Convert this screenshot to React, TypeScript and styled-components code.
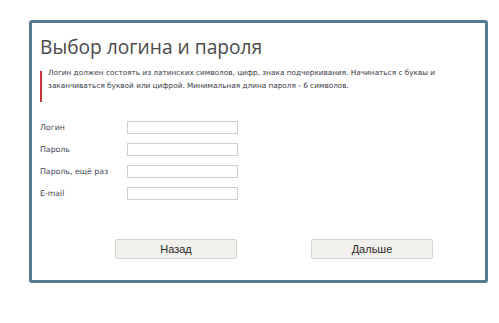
import React from "react";
import styled, { createGlobalStyle } from "styled-components";

const Global = createGlobalStyle`
  html, body { margin: 0; padding: 0; background: #fff; }
  body { font-family: "DejaVu Sans", Verdana, sans-serif; }
`;

const Page = styled.div`
  padding: 20px 0 0 29px;
`;

const Panel = styled.div`
  box-sizing: border-box;
  width: 459px;
  height: 263px;
  border: 3px solid #547b8f;
  border-radius: 3px;
  background: #fff;
  padding: 11px 8px 0 8px;
  display: flex;
  flex-direction: column;
`;

const Title = styled.h1`
  margin: 0;
  font-family: "Open Sans", sans-serif;
  font-weight: 400;
  font-size: 19.2px;
  line-height: 26px;
  color: #4a4a4a;
`;

const Note = styled.div`
  position: relative;
  margin-top: 6px;
  padding: 0 0 10px 8px;
  font-size: 7.3px;
  line-height: 13px;
  color: #3a3a44;
  &::before {
    content: "";
    position: absolute;
    left: 0;
    top: 5px;
    bottom: 0;
    width: 2px;
    background: #c9343a;
  }
`;

const Form = styled.div`
  margin-top: 19px;
  display: flex;
  flex-direction: column;
  gap: 9px;
`;

const Row = styled.div`
  display: flex;
  align-items: center;
  height: 13px;
`;

const Label = styled.label`
  width: 87px;
  font-size: 7.8px;
  color: #3e4452;
`;

const Input = styled.input`
  box-sizing: border-box;
  width: 111px;
  height: 13px;
  margin: 0;
  padding: 0;
  border: 1px solid #cfcfcf;
  background: #fff;
  outline: none;
`;

const Buttons = styled.div`
  margin-top: 39px;
  padding-left: 75px;
  display: flex;
  gap: 74px;
`;

const Button = styled.button`
  box-sizing: border-box;
  width: 122px;
  height: 20px;
  margin: 0;
  padding: 0;
  border: 1px solid #d6d5d0;
  border-radius: 2px;
  background: #f1f0ec;
  font-family: "Liberation Sans", Arial, sans-serif;
  font-size: 11px;
  color: #2a2a2a;
`;

const fields = ["Логин", "Пароль", "Пароль, ещё раз", "E-mail"];

export default function App() {
  return (
    <>
      <Global />
      <Page>
        <Panel>
          <Title>Выбор логина и пароля</Title>
          <Note>
            Логин должен состоять из латинских символов, цифр, знака подчеркивания. Начинаться с буквы и
            <br />
            заканчиваться буквой или цифрой. Минимальная длина пароля - 6 символов.
          </Note>
          <Form>
            {fields.map((f) => (
              <Row key={f}>
                <Label>{f}</Label>
                <Input type={f.startsWith("Пароль") ? "password" : "text"} />
              </Row>
            ))}
          </Form>
          <Buttons>
            <Button>Назад</Button>
            <Button>Дальше</Button>
          </Buttons>
        </Panel>
      </Page>
    </>
  );
}
